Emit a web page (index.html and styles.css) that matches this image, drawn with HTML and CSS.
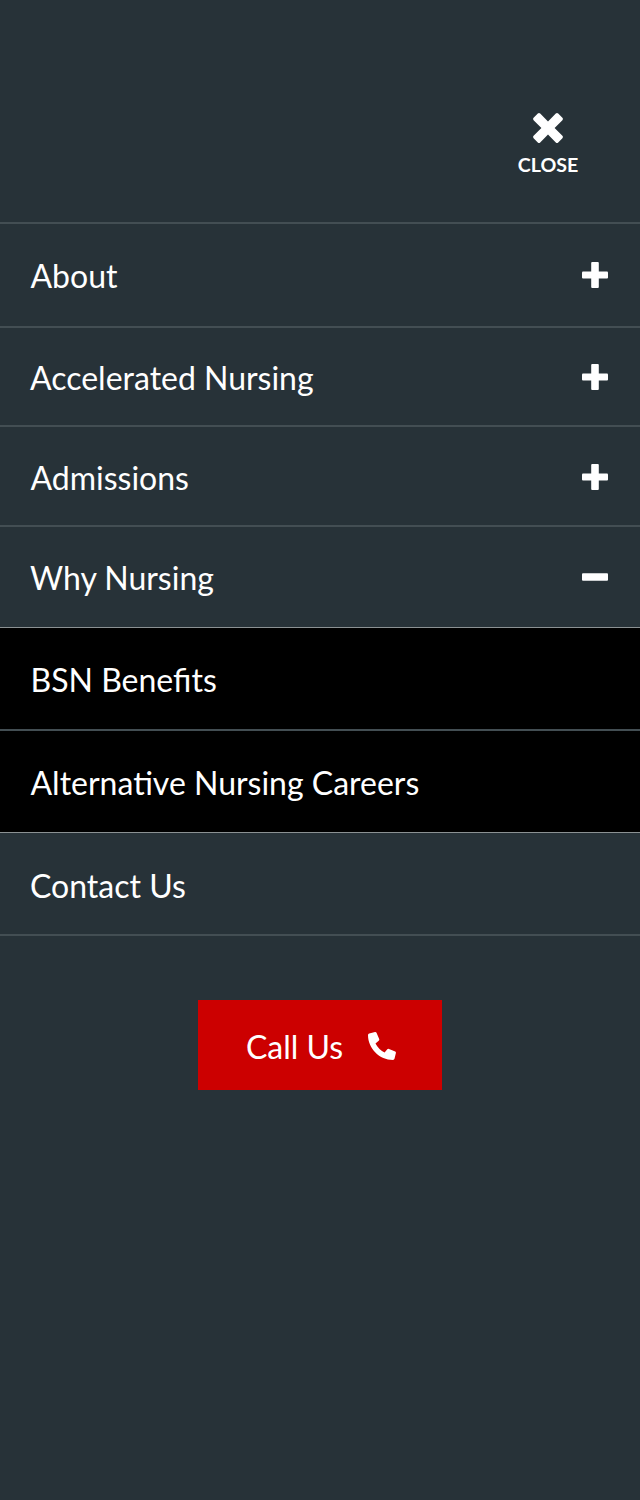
FILE: index.html
```html
<!DOCTYPE html>
<html lang="en">
<head>
<meta charset="utf-8">
<meta name="viewport" content="width=device-width, initial-scale=1">
<title>Menu</title>
<link rel="stylesheet" href="styles.css">
</head>
<body>
<header class="top">
  <button class="close" type="button">
    <svg class="close-icon" viewBox="0 0 30 30"><path d="M4.800 .6Q6 -.4 7.200 .6L15 8.400L22.800 .6Q24 -.4 25.200 .6L29.400 4.800Q30.400 6 29.400 7.200L21.600 15L29.400 22.800Q30.400 24 29.400 25.200L25.200 29.400Q24 30.400 22.800 29.400L15 21.600L7.200 29.400Q6 30.400 4.800 29.400L.6 25.200Q-.4 24 .6 22.800L8.400 15L.6 7.200Q-.4 6 .6 4.800Z"/></svg>
    <span>CLOSE</span>
  </button>
</header>
<nav class="menu">
  <a class="item about"><span>About</span><svg class="toggle" viewBox="0 0 26 26"><rect x="9.200" width="7.600" height="26" rx="1"/><rect y="9.400" width="26" height="7.200" rx="1"/></svg></a>
  <a class="item accelerated"><span>Accelerated Nursing</span><svg class="toggle" viewBox="0 0 26 26"><rect x="9.200" width="7.600" height="26" rx="1"/><rect y="9.400" width="26" height="7.200" rx="1"/></svg></a>
  <a class="item admissions"><span>Admissions</span><svg class="toggle" viewBox="0 0 26 26"><rect x="9.200" width="7.600" height="26" rx="1"/><rect y="9.400" width="26" height="7.200" rx="1"/></svg></a>
  <a class="item why"><span>Why Nursing</span><svg class="toggle" viewBox="0 0 26 26"><rect y="9.200" width="26" height="7.600" rx="1"/></svg></a>
  <div class="submenu">
    <a class="item benefits"><span>BSN Benefits</span></a>
    <a class="item careers"><span>Alternative Nursing Careers</span></a>
  </div>
  <a class="item contact"><span>Contact Us</span></a>
</nav>
<a class="call"><span>Call Us</span><svg class="phone" viewBox="0 0 28 28"><path d="M1.200 1.500L7 .1Q8 -.1 8.500 .8L11.200 7Q11.500 8 10.700 8.700L7.500 11.400Q10.600 17.400 16.600 20.500L19.300 17.300Q20 16.500 21 16.900L27.200 19.500Q28.100 20 27.900 21L26.500 26.800Q26.200 27.900 25 28C11.500 28 0 16.500 0 3Q.1 1.800 1.200 1.500Z"/></svg></a>
</body>
</html>
```
FILE: styles.css
```css
* { box-sizing: border-box; }
body {
  margin: 0;
  min-height: 1500px;
  background: #273238;
  color: #fff;
  font-family: Lato, sans-serif;
  font-size: 32px;
}
.top {
  height: 222px;
  display: flex;
  justify-content: flex-end;
  align-items: flex-start;
  padding: 113px 61px 0 0;
}
.close {
  display: flex;
  flex-direction: column;
  align-items: center;
  gap: 10px;
  width: 62px;
  padding: 0;
  border: 0;
  background: none;
  color: inherit;
  font: bold 19.600px/24px Lato, sans-serif;
}
.close-icon { width: 30px; height: 30px; fill: #fff; }
.menu { border-top: 2px solid #434e53; }
.item {
  display: flex;
  align-items: center;
  justify-content: space-between;
  padding: 4px 32px 0 30.500px;
  border-bottom: 2px solid #434e53;
  line-height: 40px;
}
.about { height: 104px; padding-top: 2px; }
.accelerated { height: 99px; padding: 3px 32px 0 30px; }
.admissions { height: 100px; padding-top: 4px; }
.why { height: 101px; padding: 2px 32px 0 30px; border-bottom: 1px solid #8b9193; }
.submenu { background: #000; }
.benefits { height: 103px; padding-top: 3px; }
.careers { height: 102px; padding-top: 2px; border-bottom: 1px solid #8b9193; }
.contact { height: 103px; padding: 5px 32px 0 30px; }
.toggle { width: 26px; height: 26px; margin-top: -2px; fill: #fff; }
.about .toggle { margin-top: -3px; }
.call {
  display: flex;
  align-items: center;
  justify-content: center;
  gap: 25px;
  width: 244px;
  height: 90px;
  margin: 64px auto 0;
  padding: 2px 0 0 2px;
  background: #c00;
}
.phone { width: 28px; height: 28px; fill: #fff; }
```
